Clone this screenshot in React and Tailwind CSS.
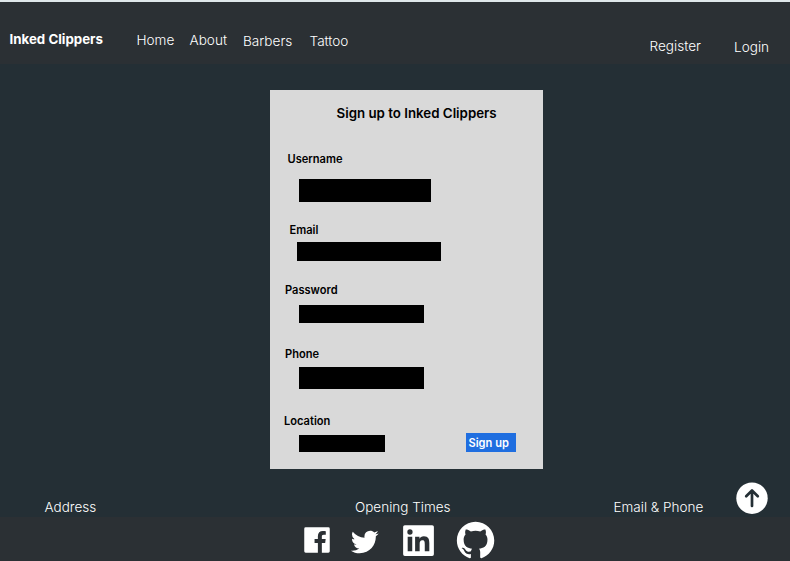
import { BiLogoFacebookSquare, BiLogoTwitter, BiLogoLinkedinSquare, BiLogoGithub } from "react-icons/bi";

function Field({ label, labelClass, inputClass }) {
  return (
    <label className="block">
      <span className={`block h-4 whitespace-nowrap text-[11.1px] leading-4 font-semibold ${labelClass}`}>{label}</span>
      <span className={`block bg-black ${inputClass}`} />
    </label>
  );
}

function NavBar() {
  return (
    <nav className="flex h-[64px] items-start border-t-2 border-[#dfe7e9] bg-[#2b3034] text-[13.6px] leading-4 font-light whitespace-nowrap">
      <span className="mt-[29px] ml-[9.5px] w-[127px] text-[13.3px] font-bold">Inked Clippers</span>
      <a className="mt-[30px] w-[53px]">Home</a>
      <a className="mt-[30px] w-[53.5px]">About</a>
      <a className="mt-[31px] w-[66.5px]">Barbers</a>
      <a className="mt-[31px] grow">Tattoo</a>
      <a className="mt-[36px] w-[84.5px]">Register</a>
      <a className="mt-[37px] w-[56px]">Login</a>
    </nav>
  );
}

function SignUpCard() {
  return (
    <form className="ml-[270px] h-[379px] w-[273px] bg-[#d9d9d9] pt-[15px] text-black">
      <h1 className="ml-[66.5px] text-[13.3px] leading-4 font-semibold whitespace-nowrap">Sign up to Inked Clippers</h1>
      <div className="mt-[30px]">
        <Field label="Username" labelClass="ml-[17.5px]" inputClass="mt-[12px] ml-[29px] h-[23px] w-[132px]" />
      </div>
      <div className="mt-[20px]">
        <Field label="Email" labelClass="ml-[19.5px]" inputClass="mt-[4px] ml-[27px] h-[19px] w-[144px]" />
      </div>
      <div className="mt-[21px]">
        <Field label="Password" labelClass="ml-[15px]" inputClass="mt-[7px] ml-[29px] h-[18px] w-[125px]" />
      </div>
      <div className="mt-[23px]">
        <Field label="Phone" labelClass="ml-[15px]" inputClass="mt-[5px] ml-[29px] h-[22px] w-[125px]" />
      </div>
      <div className="mt-[23.5px] flex items-end">
        <Field label="Location" labelClass="ml-[14px]" inputClass="mt-[6.5px] ml-[29px] h-[17px] w-[86px]" />
        <button type="button" className="ml-[81px] h-[19px] w-[50px] bg-[#1f6ee0] pl-[2.5px] text-left text-[11.1px] leading-[20px] font-semibold whitespace-nowrap text-white">
          Sign up
        </button>
      </div>
    </form>
  );
}

export default function App() {
  return (
    <div className="flex h-[561px] w-[790px] flex-col overflow-hidden bg-[#242f35] font-['Inter',sans-serif] text-white">
      <NavBar />
      <main className="h-[453px] pt-[26px]">
        <SignUpCard />
        <div className="flex items-start text-[13.5px] leading-4 font-light whitespace-nowrap">
          <span className="mt-[30px] ml-[44.5px] w-[310.5px]">Address</span>
          <span className="mt-[30px] w-[258.5px]">Opening Times</span>
          <span className="mt-[30px] w-[122px]">Email &amp; Phone</span>
          <button type="button" aria-label="Back to top" className="mt-[13px]">
            <svg className="block size-8" viewBox="0 0 32 32" fill="none">
              <circle cx="16" cy="16.2" r="15.7" fill="white" />
              <path d="M16 24V9.3M10.2 14.3L16 8.5L21.8 14.3" stroke="#242f35" strokeWidth="2.7" strokeLinecap="round" strokeLinejoin="round" />
            </svg>
          </button>
        </div>
      </main>
      <footer className="flex h-[44px] items-start bg-[#2b3034]">
        <BiLogoFacebookSquare className="mt-[6px] ml-[299.5px] size-[34px] shrink-0" />
        <BiLogoTwitter className="mt-[8px] ml-[14px] size-[34px] shrink-0" />
        <BiLogoLinkedinSquare className="mt-[2.5px] ml-[16px] size-[41px] shrink-0" />
        <BiLogoGithub className="mt-[0.5px] ml-[14.5px] size-[45px] shrink-0" />
      </footer>
    </div>
  );
}
